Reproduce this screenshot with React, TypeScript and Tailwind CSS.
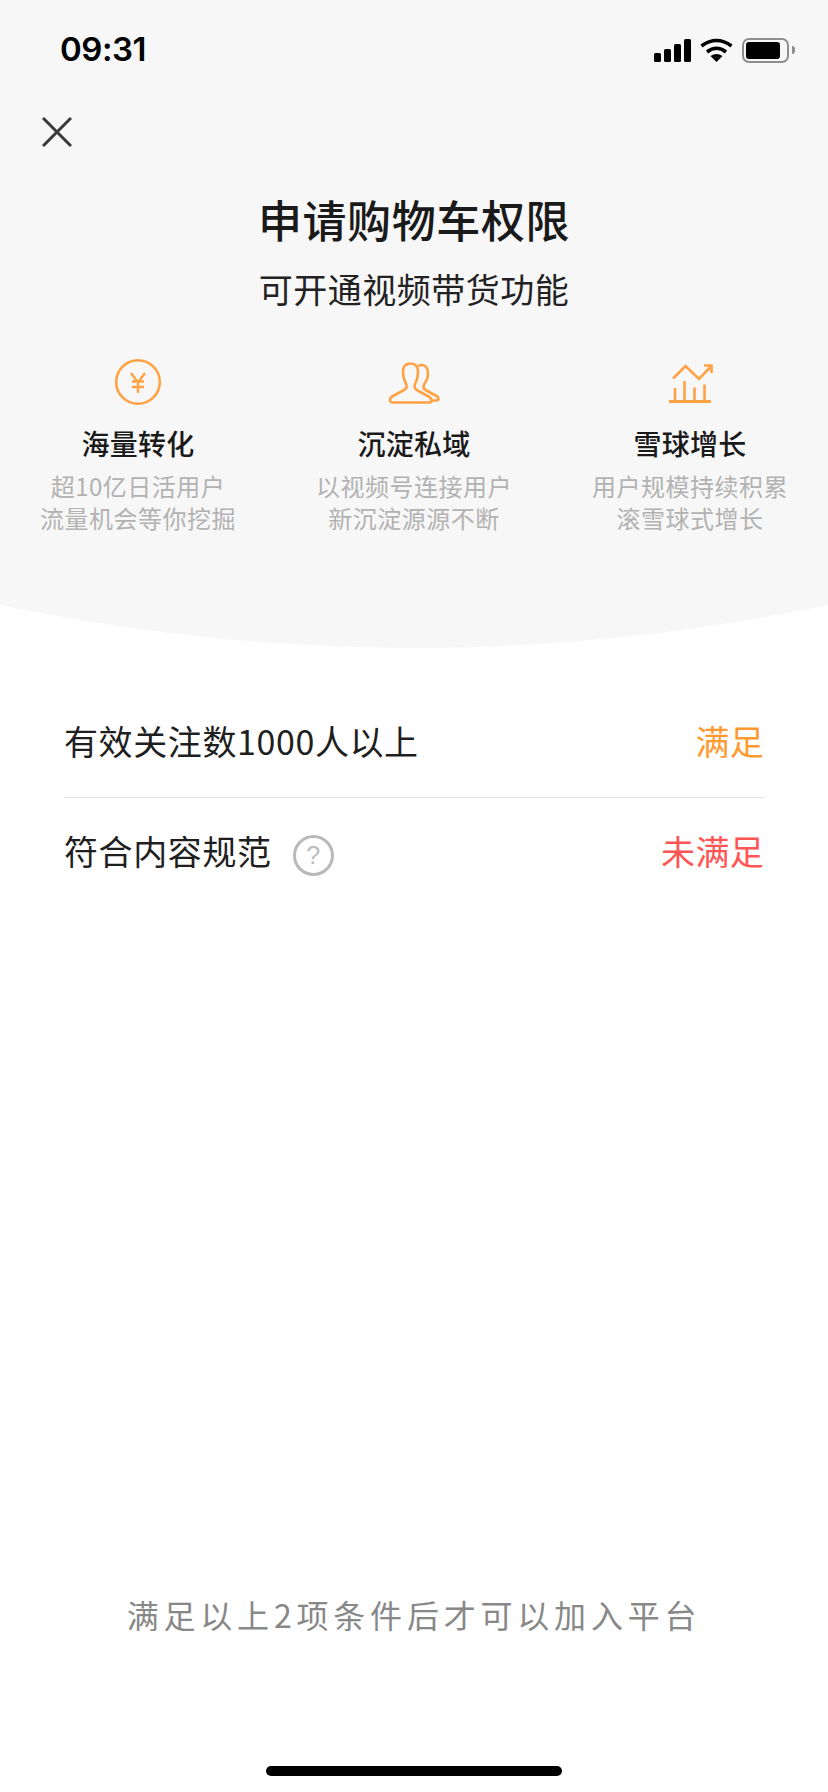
const features = [
  { title: "海量转化", lines: ["超10亿日活用户", "流量机会等你挖掘"], icon: <YenIcon /> },
  { title: "沉淀私域", lines: ["以视频号连接用户", "新沉淀源源不断"], icon: <PeopleIcon /> },
  { title: "雪球增长", lines: ["用户规模持续积累", "滚雪球式增长"], icon: <ChartIcon /> },
];

function YenIcon() {
  return (
    <svg width="50" height="50" viewBox="0 0 50 50" fill="none" stroke="#ffa245" strokeWidth="2.6">
      <circle cx="25" cy="25" r="21.8" />
      <path d="M18 16l7 9.5 7-9.5M19 24.5h12M19 30h12M25 25v11" strokeWidth="2.4" />
    </svg>
  );
}

function PeopleIcon() {
  return (
    <svg width="56" height="46" viewBox="-1 -2 56 46" fill="none" stroke="#ffa245" strokeWidth="2.6" strokeLinejoin="round">
      <path d="M6 41.5H42.5Q44.5 41.5 44.5 39.5Q44.5 37 42.5 36L30.5 29.5Q26.5 27 28 23Q31 17.5 31 11Q31 2.5 23.5 2.5Q16 2.5 16 11Q16 17.5 19 22.5Q21 26.5 17 29L5 35.5Q3 37 3 39Q3 41.5 6 41.5Z" />
      <path d="M31 5Q33 3.8 35.5 4Q41 5 41 13Q41 18 37 23.5Q35.5 27 38.5 29L49.5 35Q51.5 36 51.5 37.5Q51.5 39.5 49.5 39.5H44" />
    </svg>
  );
}

function ChartIcon() {
  return (
    <svg width="46" height="44" viewBox="0 0 46 44" fill="none" stroke="#ffa245" strokeWidth="2.6">
      <path d="M6 18.5L18.5 6L32 19L44 6.5" />
      <path d="M37 5.5H44.5V13" />
      <path d="M2 41.5H44" strokeWidth="2.8" />
      <path d="M8 41V28M17.5 41V21M27.5 41V27.5M37.5 41V24.5" />
    </svg>
  );
}

function StatusIcons() {
  return (
    <div className="flex items-center">
      <div className="flex items-end gap-[3px]">
        <div className="w-[7px] h-[9px] rounded-[1.5px] bg-black" />
        <div className="w-[7px] h-[13px] rounded-[1.5px] bg-black" />
        <div className="w-[7px] h-[18px] rounded-[1.5px] bg-black" />
        <div className="w-[7px] h-[23px] rounded-[1.5px] bg-black" />
      </div>
      <svg className="ml-[9px]" width="33" height="24" viewBox="0 0 33 24" fill="none" stroke="#000" strokeWidth="3.6">
        <path d="M1.5 8Q16.5 -3 31.5 8" />
        <path d="M7 14Q16.5 6.5 26 14" />
        <path d="M16.5 24L10.5 18Q16.5 14 22.5 18Z" fill="#000" stroke="none" />
      </svg>
      <div className="ml-[9px] w-[47px] h-[25px] rounded-[7px] border-2 border-[#8f8f8f] pl-[2px] pr-[7px] py-[2px]">
        <div className="w-full h-full rounded-[3px] bg-black" />
      </div>
      <div className="ml-[3px] w-[3px] h-[8px] rounded-r-[3px] bg-[#8f8f8f]" />
    </div>
  );
}

export default function App() {
  return (
    <div className="w-[828px] h-[1792px] bg-white flex flex-col font-['Noto_Sans_CJK_SC','Noto_Sans',sans-serif]">
      <div className="h-[605px] bg-[#f7f7f7] flex flex-col">
        <div className="h-[100px] flex items-center justify-between pl-[60px] pr-[33px]">
          <span className="font-['Inter',sans-serif] text-[33px] font-semibold tracking-[-0.5px] text-black">09:31</span>
          <StatusIcons />
        </div>
        <svg className="ml-[42px] mt-[17px]" width="30" height="30" viewBox="0 0 30 30" fill="none" stroke="#3a3a3a" strokeWidth="3">
          <path d="M1 1L29 29M29 1L1 29" />
        </svg>
        <h1 className="mt-[42px] h-[60px] leading-[60px] text-center text-[44px] tracking-[0.6px] font-medium text-[#1a1a1a]">申请购物车权限</h1>
        <p className="mt-[15px] h-[50px] leading-[50px] text-center text-[34px] tracking-[0.5px] text-[#222222]">可开通视频带货功能</p>
        <div className="mt-[42px] grid grid-cols-3">
          {features.map((f) => (
            <div key={f.title} className="flex flex-col items-center">
              <div className="h-[52px] flex items-center justify-center">{f.icon}</div>
              <div className="mt-[17px] h-[36px] leading-[36px] text-[28px] tracking-[0.3px] font-medium text-[#1a1a1a]">{f.title}</div>
              <div className="mt-[9px] text-[24px] leading-[32px] tracking-[0.5px] text-center text-[#b2b2b2]">
                {f.lines.map((l) => (
                  <div key={l}>{l}</div>
                ))}
              </div>
            </div>
          ))}
        </div>
      </div>
      <svg className="block shrink-0" width="828" height="44" viewBox="0 0 828 44">
        <path d="M0 0H828Q414 86 0 0Z" fill="#f7f7f7" />
      </svg>

      <div className="mt-[39px] mx-[64px] flex flex-col">
        <div className="h-[110px] pb-[4px] flex items-center justify-between border-b border-[#e5e5e5]">
          <span className="text-[34px] tracking-[0.6px] text-[#1f1f1f]">有效关注数1000人以上</span>
          <span className="text-[34px] tracking-[0.3px] text-[#ff9a33]">满足</span>
        </div>
        <div className="h-[108px] pb-[4px] flex items-center justify-between">
          <div className="flex items-center">
            <span className="text-[34px] tracking-[0.6px] text-[#1f1f1f]">符合内容规范</span>
            <div className="ml-[21px] mt-[10px] w-[41px] h-[41px] rounded-full border-[3px] border-[#b9b9b9] flex items-center justify-center text-[25px] leading-none text-[#bcbcbc] font-['Liberation_Sans',sans-serif]">?</div>
          </div>
          <span className="text-[34px] tracking-[0.3px] text-[#ff5555]">未满足</span>
        </div>
      </div>

      <div className="mt-auto flex flex-col items-center pb-[16px]">
        <p className="h-[50px] leading-[50px] text-[32px] tracking-[4.8px] text-[#888888]">满足以上2项条件后才可以加入平台</p>
        <div className="mt-[127px] w-[296px] h-[10px] rounded-full bg-black" />
      </div>
    </div>
  );
}
